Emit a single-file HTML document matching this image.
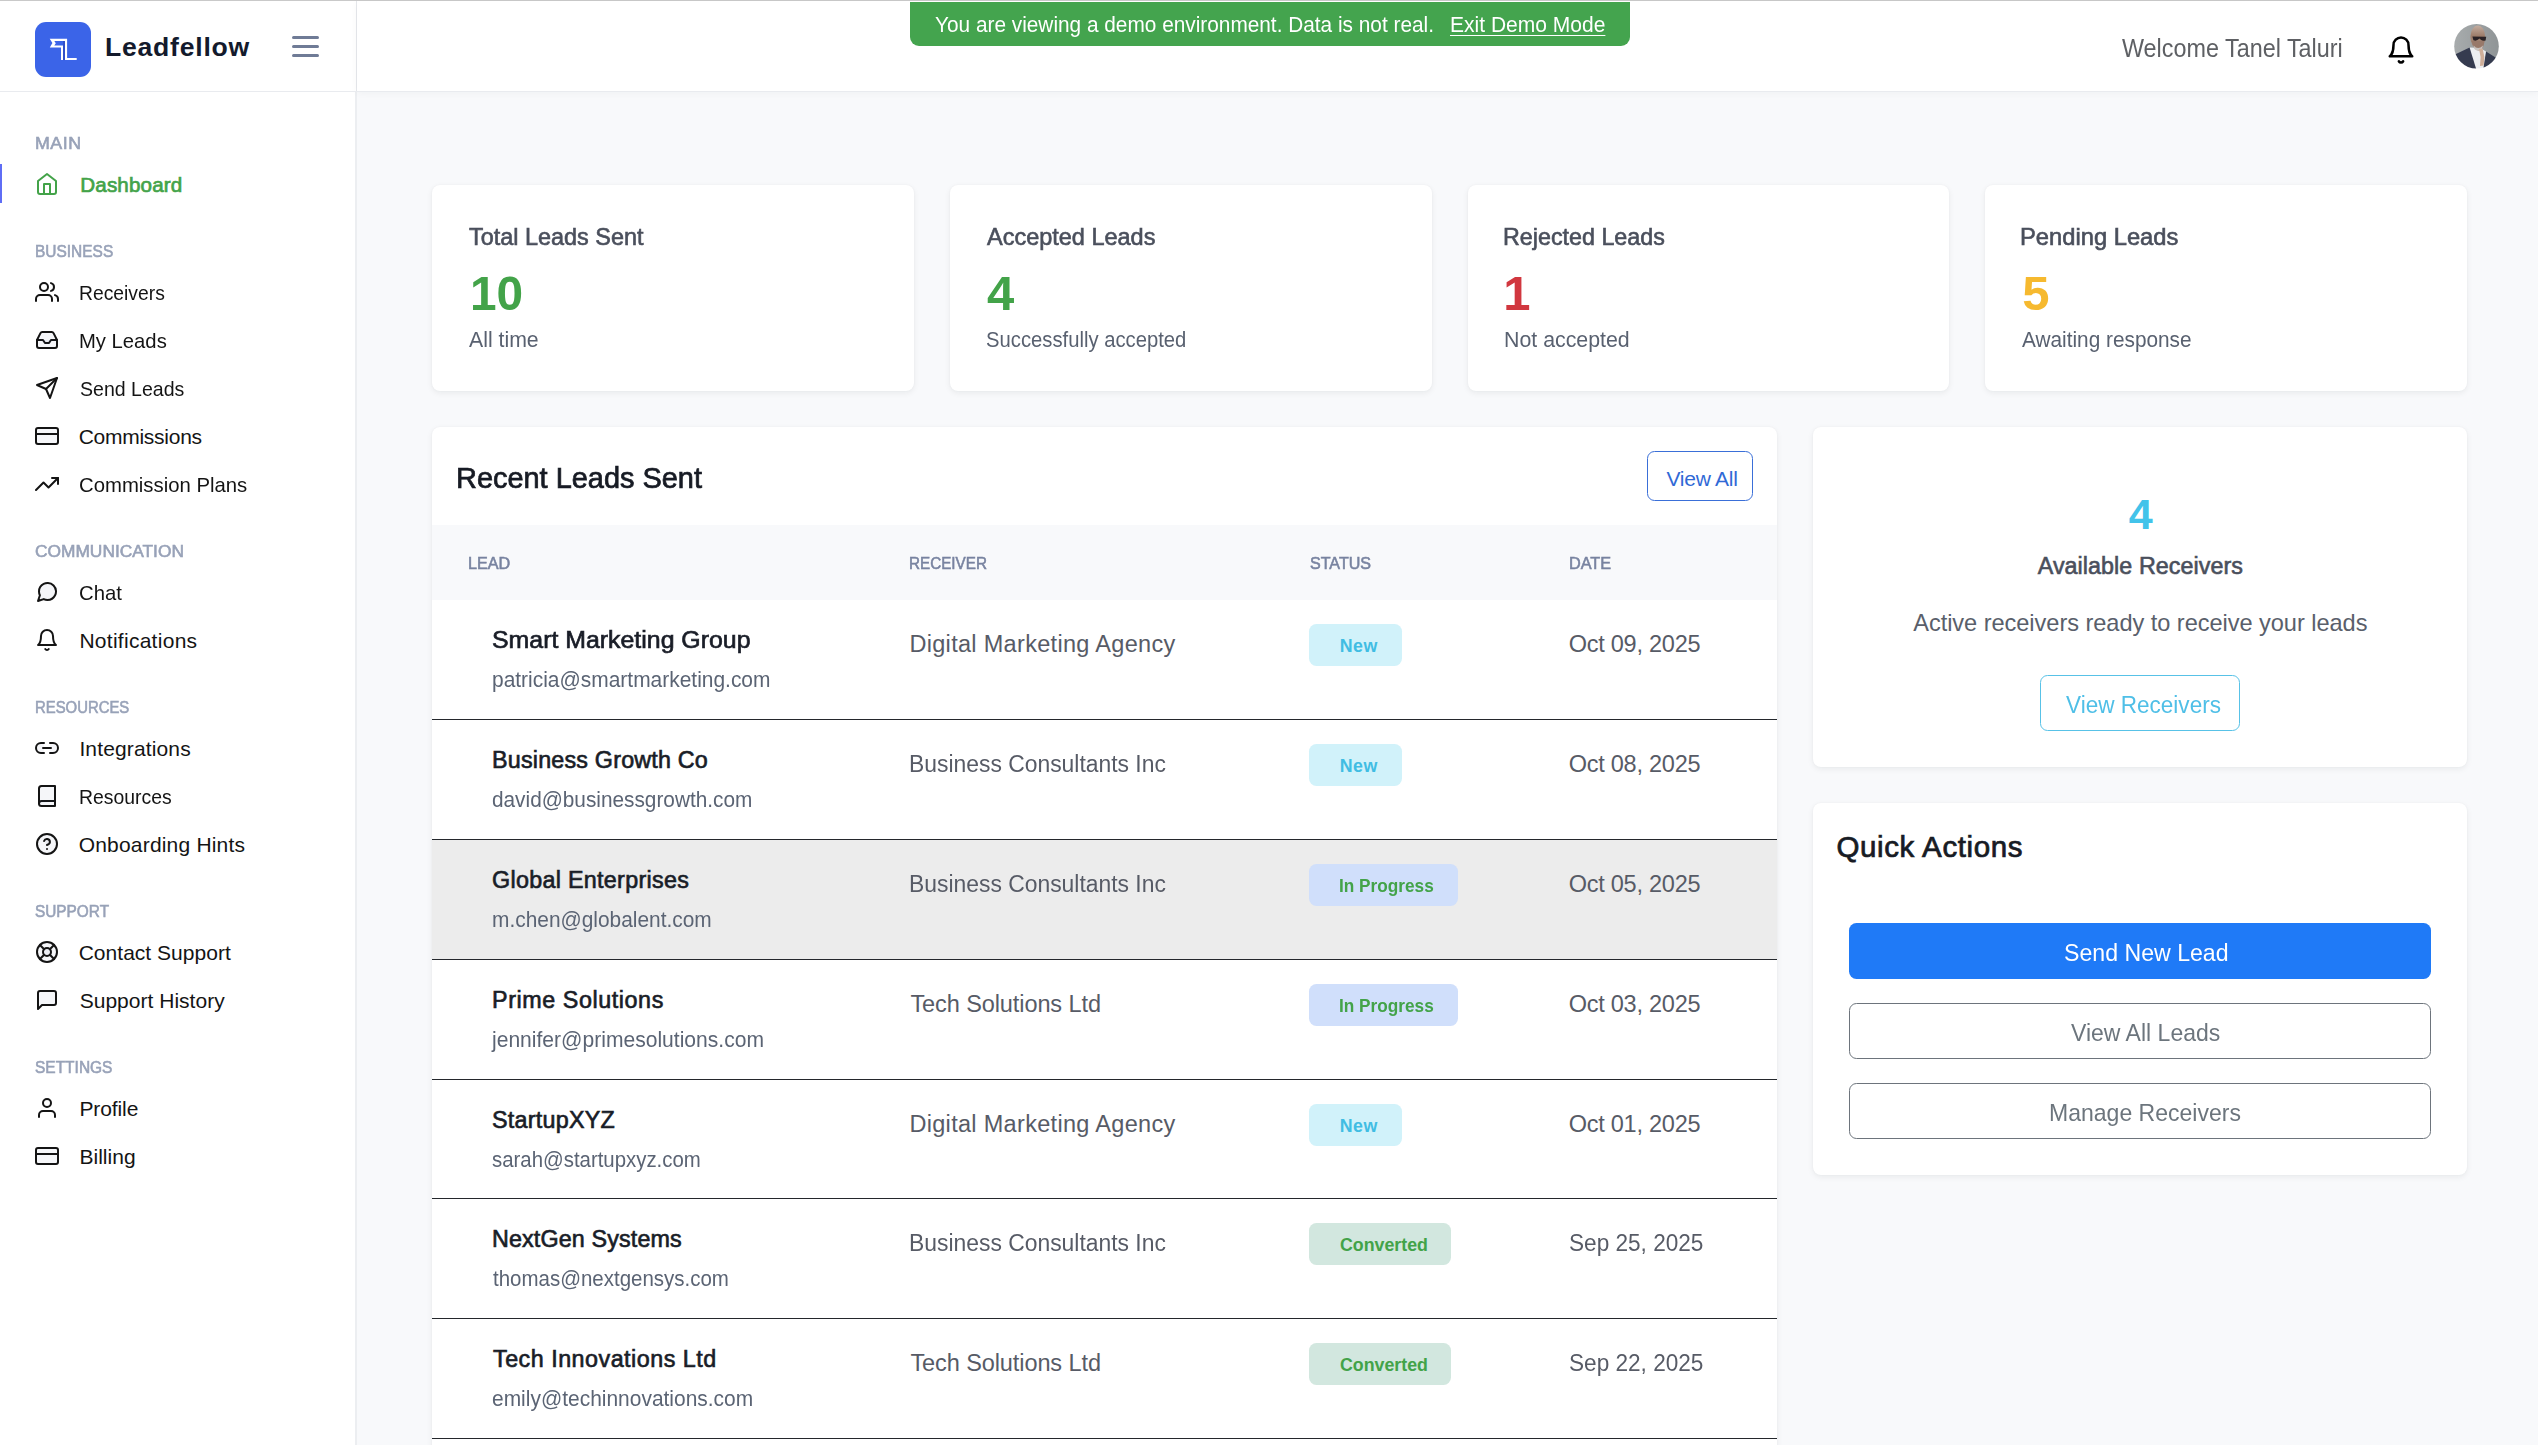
<!DOCTYPE html>
<html lang="en"><head><meta charset="utf-8"><title>Leadfellow – Dashboard</title>
<style>
html,body{margin:0;padding:0}
body{width:2538px;height:1445px;overflow:hidden;background:#f8f9fb;position:relative;font-family:'Liberation Sans',sans-serif}
.abs,.t,.ic,.box{position:absolute}
.t{transform-origin:0 50%;white-space:pre;margin:0;padding:0;text-decoration:none;font-weight:400;display:block}
aside,header,main,section,nav,ul,li,table{position:absolute;left:0;top:0;margin:0;padding:0;list-style:none}
.card{position:absolute;background:#fff;border-radius:8px;box-shadow:0 2px 6px rgba(20,25,35,.065),0 0 2px rgba(20,25,35,.045)}
.badge{position:absolute;border-radius:7.5px;height:42px}
.btn{position:absolute;box-sizing:border-box;border-radius:7.5px;background:#fff}
.line{position:absolute;left:432px;width:1345px;height:1px;background:#24272c}
</style></head><body>

<div class="box" style="left:0;top:0;width:2538px;height:1px;background:#c9c9c9"></div>
<aside>
<div class="box" style="left:0;top:1px;width:357px;height:1444px;background:#fff"></div>
<div class="box" style="left:355px;top:92px;width:2px;height:1353px;background:#eceef1"></div>
<div class="box" style="left:356px;top:1px;width:1px;height:90px;background:#e6e8ec"></div>
<div class="box" style="left:35px;top:22px;width:56px;height:55px;border-radius:11px;background:#3b64e8"></div>
<svg class="ic" style="left:35px;top:22px" width="56" height="55" viewBox="35 22 56 55"><rect x="63" y="41" width="2" height="19.1" fill="#3150c8"/><polygon fill="#fff" points="49.7,38.8 67.1,38.8 67.1,57.9 76.7,57.9 76.7,60.1 65,60.1 65,41 54.3,41 55.8,43.2 54.3,45.4 63,45.4 63,60.1 61,60.1 61,47.5 49.8,47.5 52.4,43.1"/></svg>
<div class="t brand" style="left:105.00px;top:34.00px;font-size:26.6px;line-height:26.6px;font-weight:700;letter-spacing:0.763px;color:#131a2c;">Leadfellow</div>
<div class="box" style="left:292.4px;top:36.1px;width:26.5px;height:3px;border-radius:2px;background:#6f7b96"></div>
<div class="box" style="left:292.4px;top:45.1px;width:26.5px;height:3px;border-radius:2px;background:#6f7b96"></div>
<div class="box" style="left:292.4px;top:53.9px;width:26.5px;height:3px;border-radius:2px;background:#6f7b96"></div>
<nav>
<h6 class="t" style="left:34.82px;top:135.00px;font-size:16.2px;line-height:16.2px;letter-spacing:0.456px;transform:scaleX(1.1000);-webkit-text-stroke:0.58px #98a2b8;color:#98a2b8;">MAIN</h6>
<h6 class="t" style="left:34.92px;top:243.00px;font-size:16.2px;line-height:16.2px;transform:scaleX(0.9554);-webkit-text-stroke:0.58px #98a2b8;color:#98a2b8;">BUSINESS</h6>
<h6 class="t" style="left:35.21px;top:543.00px;font-size:16.2px;line-height:16.2px;transform:scaleX(1.0707);-webkit-text-stroke:0.58px #98a2b8;color:#98a2b8;">COMMUNICATION</h6>
<h6 class="t" style="left:34.95px;top:699.00px;font-size:16.2px;line-height:16.2px;transform:scaleX(0.9196);-webkit-text-stroke:0.58px #98a2b8;color:#98a2b8;">RESOURCES</h6>
<h6 class="t" style="left:35.18px;top:903.00px;font-size:16.2px;line-height:16.2px;transform:scaleX(0.9498);-webkit-text-stroke:0.58px #98a2b8;color:#98a2b8;">SUPPORT</h6>
<h6 class="t" style="left:35.18px;top:1059.00px;font-size:16.2px;line-height:16.2px;transform:scaleX(0.9568);-webkit-text-stroke:0.58px #98a2b8;color:#98a2b8;">SETTINGS</h6>
<div class="box" style="left:0;top:164px;width:2px;height:39px;background:#5f6df5"></div>
<svg class="ic" style="left:35px;top:172px" width="24" height="24" viewBox="0 0 24 24" fill="none" stroke="#43a349" stroke-width="2" stroke-linecap="round" stroke-linejoin="round"><path d="M3 9l9-7 9 7v11a2 2 0 0 1-2 2H5a2 2 0 0 1-2-2z"/><polyline points="9 22 9 12 15 12 15 22"/></svg>
<a class="t" style="left:80.25px;top:175.00px;font-size:20.6px;line-height:20.6px;letter-spacing:0.163px;-webkit-text-stroke:0.7px #43a349;color:#43a349;">Dashboard</a>
<svg class="ic" style="left:35px;top:280px" width="24" height="24" viewBox="0 0 24 24" fill="none" stroke="#141414" stroke-width="2" stroke-linecap="round" stroke-linejoin="round"><path d="M17 21v-2a4 4 0 0 0-4-4H5a4 4 0 0 0-4 4v2"/><circle cx="9" cy="7" r="4"/><path d="M23 21v-2a4 4 0 0 0-3-3.87"/><path d="M16 3.13a4 4 0 0 1 0 7.75"/></svg>
<a class="t" style="left:79.48px;top:282.00px;font-size:21px;line-height:21px;transform:scaleX(0.9188);color:#141414;">Receivers</a>
<svg class="ic" style="left:35px;top:328px" width="24" height="24" viewBox="0 0 24 24" fill="rgba(70,90,150,.055)" stroke="#141414" stroke-width="2" stroke-linecap="round" stroke-linejoin="round"><polyline points="22 12 16 12 14 15 10 15 8 12 2 12"/><path d="M5.45 5.11L2 12v6a2 2 0 0 0 2 2h16a2 2 0 0 0 2-2v-6l-3.45-6.89A2 2 0 0 0 16.76 4H7.24a2 2 0 0 0-1.79 1.11z"/></svg>
<a class="t" style="left:79.44px;top:330.00px;font-size:21px;line-height:21px;transform:scaleX(0.9638);color:#141414;">My Leads</a>
<svg class="ic" style="left:35px;top:376px" width="24" height="24" viewBox="0 0 24 24" fill="none" stroke="#141414" stroke-width="2" stroke-linecap="round" stroke-linejoin="round"><line x1="22" y1="2" x2="11" y2="13"/><polygon points="22 2 15 22 11 13 2 9 22 2"/></svg>
<a class="t" style="left:79.70px;top:378.00px;font-size:21px;line-height:21px;transform:scaleX(0.9310);color:#141414;">Send Leads</a>
<svg class="ic" style="left:35px;top:424px" width="24" height="24" viewBox="0 0 24 24" fill="rgba(70,90,150,.055)" stroke="#141414" stroke-width="2" stroke-linecap="round" stroke-linejoin="round"><rect x="1" y="4" width="22" height="16" rx="2" ry="2"/><line x1="1" y1="10" x2="23" y2="10"/></svg>
<a class="t" style="left:78.70px;top:426.00px;font-size:21px;line-height:21px;letter-spacing:-0.262px;color:#141414;">Commissions</a>
<svg class="ic" style="left:35px;top:472px" width="24" height="24" viewBox="0 0 24 24" fill="none" stroke="#141414" stroke-width="2" stroke-linecap="round" stroke-linejoin="round"><polyline points="23 6 13.5 15.5 8.5 10.5 1 18"/><polyline points="17 6 23 6 23 12"/></svg>
<a class="t" style="left:78.73px;top:474.00px;font-size:21px;line-height:21px;transform:scaleX(0.9676);color:#141414;">Commission Plans</a>
<svg class="ic" style="left:35px;top:580px" width="24" height="24" viewBox="0 0 24 24" fill="rgba(70,90,150,.055)" stroke="#141414" stroke-width="2" stroke-linecap="round" stroke-linejoin="round"><path d="M21 11.5a8.38 8.38 0 0 1-.9 3.8 8.5 8.5 0 0 1-7.6 4.7 8.38 8.38 0 0 1-3.8-.9L3 21l1.9-5.7a8.38 8.38 0 0 1-.9-3.8 8.5 8.5 0 0 1 4.7-7.6 8.38 8.38 0 0 1 3.8-.9h.5a8.48 8.48 0 0 1 8 8v.5z"/></svg>
<a class="t" style="left:78.73px;top:582.00px;font-size:21px;line-height:21px;transform:scaleX(0.9673);color:#141414;">Chat</a>
<svg class="ic" style="left:35px;top:628px" width="24" height="24" viewBox="0 0 24 24" fill="none" stroke="#141414" stroke-width="2" stroke-linecap="round" stroke-linejoin="round"><path d="M18 8A6 6 0 0 0 6 8c0 7-3 9-3 9h18s-3-2-3-9"/><path d="M13.73 21a2 2 0 0 1-3.46 0"/></svg>
<a class="t" style="left:79.40px;top:630.00px;font-size:21px;line-height:21px;letter-spacing:0.276px;color:#141414;">Notifications</a>
<svg class="ic" style="left:35px;top:736px" width="24" height="24" viewBox="0 0 24 24" fill="rgba(70,90,150,.055)" stroke="#141414" stroke-width="2" stroke-linecap="round" stroke-linejoin="round"><path d="M15 7h3a5 5 0 0 1 5 5 5 5 0 0 1-5 5h-3m-6 0H6a5 5 0 0 1-5-5 5 5 0 0 1 5-5h3"/><line x1="8" y1="12" x2="16" y2="12"/></svg>
<a class="t" style="left:79.40px;top:738.00px;font-size:21px;line-height:21px;letter-spacing:0.142px;color:#141414;">Integrations</a>
<svg class="ic" style="left:35px;top:784px" width="24" height="24" viewBox="0 0 24 24" fill="rgba(70,90,150,.055)" stroke="#141414" stroke-width="2" stroke-linecap="round" stroke-linejoin="round"><path d="M4 19.5A2.5 2.5 0 0 1 6.5 17H20"/><path d="M6.5 2H20v20H6.5A2.5 2.5 0 0 1 4 19.5v-15A2.5 2.5 0 0 1 6.5 2z"/></svg>
<a class="t" style="left:79.48px;top:786.00px;font-size:21px;line-height:21px;transform:scaleX(0.9234);color:#141414;">Resources</a>
<svg class="ic" style="left:35px;top:832px" width="24" height="24" viewBox="0 0 24 24" fill="rgba(70,90,150,.055)" stroke="#141414" stroke-width="2" stroke-linecap="round" stroke-linejoin="round"><circle cx="12" cy="12" r="10"/><path d="M9.09 9a3 3 0 0 1 5.83 1c0 2-3 3-3 3"/><line x1="12" y1="17" x2="12.01" y2="17"/></svg>
<a class="t" style="left:78.70px;top:834.00px;font-size:21px;line-height:21px;letter-spacing:0.192px;color:#141414;">Onboarding Hints</a>
<svg class="ic" style="left:35px;top:940px" width="24" height="24" viewBox="0 0 24 24" fill="rgba(70,90,150,.055)" stroke="#141414" stroke-width="2" stroke-linecap="round" stroke-linejoin="round"><circle cx="12" cy="12" r="10"/><circle cx="12" cy="12" r="4"/><line x1="4.93" y1="4.93" x2="9.17" y2="9.17"/><line x1="14.83" y1="14.83" x2="19.07" y2="19.07"/><line x1="14.83" y1="9.17" x2="19.07" y2="4.93"/><line x1="4.93" y1="19.07" x2="9.17" y2="14.83"/></svg>
<a class="t" style="left:78.70px;top:942.00px;font-size:21px;line-height:21px;letter-spacing:0.020px;color:#141414;">Contact Support</a>
<svg class="ic" style="left:35px;top:988px" width="24" height="24" viewBox="0 0 24 24" fill="rgba(70,90,150,.055)" stroke="#141414" stroke-width="2" stroke-linecap="round" stroke-linejoin="round"><path d="M21 15a2 2 0 0 1-2 2H7l-4 4V5a2 2 0 0 1 2-2h14a2 2 0 0 1 2 2z"/></svg>
<a class="t" style="left:79.70px;top:990.00px;font-size:21px;line-height:21px;letter-spacing:0.020px;color:#141414;">Support History</a>
<svg class="ic" style="left:35px;top:1096px" width="24" height="24" viewBox="0 0 24 24" fill="none" stroke="#141414" stroke-width="2" stroke-linecap="round" stroke-linejoin="round"><path d="M20 21v-2a4 4 0 0 0-4-4H8a4 4 0 0 0-4 4v2"/><circle cx="12" cy="7" r="4"/></svg>
<a class="t" style="left:79.40px;top:1098.00px;font-size:21px;line-height:21px;letter-spacing:-0.091px;color:#141414;">Profile</a>
<svg class="ic" style="left:35px;top:1144px" width="24" height="24" viewBox="0 0 24 24" fill="rgba(70,90,150,.055)" stroke="#141414" stroke-width="2" stroke-linecap="round" stroke-linejoin="round"><rect x="1" y="4" width="22" height="16" rx="2" ry="2"/><line x1="1" y1="10" x2="23" y2="10"/></svg>
<a class="t" style="left:79.40px;top:1146.00px;font-size:21px;line-height:21px;letter-spacing:0.042px;color:#141414;">Billing</a>
</nav></aside>
<header>
<div class="box" style="left:357px;top:1px;width:2181px;height:90px;background:#fff;box-shadow:0 2px 8px rgba(30,40,60,.04)"></div>
<div class="box" style="left:0;top:91px;width:2538px;height:1px;background:#e9ebef"></div>
<div class="box" style="left:910px;top:2px;width:720px;height:44px;background:#44a44e;border-radius:0 0 9px 9px"></div>
<span class="t" style="left:934.70px;top:14.00px;font-size:22px;line-height:22px;transform:scaleX(0.9459);color:#fff;">You are viewing a demo environment. Data is not real.</span>
<a class="t" style="left:1450.04px;top:14.00px;font-size:22px;line-height:22px;transform:scaleX(0.9555);color:#fff;text-decoration:underline;text-decoration-thickness:1.4px;text-underline-offset:2.5px;">Exit Demo Mode</a>
<span class="t" style="left:2122.00px;top:36.00px;font-size:25px;line-height:25px;transform:scaleX(0.9343);color:#5e6064;">Welcome Tanel Taluri</span>
<svg class="ic" style="left:2386px;top:35px" width="30" height="30" viewBox="0 0 24 24" fill="none" stroke="#000" stroke-width="2" stroke-linecap="round" stroke-linejoin="round"><path d="M18 8A6 6 0 0 0 6 8c0 7-3 9-3 9h18s-3-2-3-9"/><path d="M13.73 21a2 2 0 0 1-3.46 0"/></svg>
<svg class="ic" style="left:2454px;top:24px" width="45" height="45" viewBox="0 0 45 45">
<defs><clipPath id="av"><circle cx="22.5" cy="22.3" r="22.3"/></clipPath>
<filter id="bl" x="-10%" y="-10%" width="120%" height="120%"><feGaussianBlur stdDeviation="0.55"/></filter>
<linearGradient id="bg" x1="0" x2="1"><stop offset="0" stop-color="#a9adae"/><stop offset="1" stop-color="#8e9395"/></linearGradient>
<linearGradient id="sk" x1="0" y1="0" x2="0" y2="1"><stop offset="0" stop-color="#c4aea1"/><stop offset=".45" stop-color="#9d7d6b"/><stop offset="1" stop-color="#a58b7c"/></linearGradient></defs>
<g clip-path="url(#av)"><g filter="url(#bl)"><rect x="-3" y="-3" width="51" height="51" fill="url(#bg)"/>
<path d="M-2 33 L2 30 L15.6 23.6 L19 28 L23 47 L-2 47Z" fill="#343a50"/>
<path d="M47 36 L40.8 33 L32 27.6 L30 33 L27.5 47 L47 47Z" fill="#343a50"/>
<path d="M15.6 23.6 L22.8 47 L29 47 L32 27.6 L26 24Z" fill="#eceef1"/>
<ellipse cx="23.8" cy="13" rx="7.4" ry="11.6" fill="url(#sk)"/>
<path d="M17.5 17 Q20 27 25 26.5 Q29.5 26 30.5 17Z" fill="#98796a"/>
<path d="M19.5 21.5 Q24 26.5 29 21.5 L28 25 Q24 28 20.5 25Z" fill="#c9c3bf"/>
<path d="M18.4 12.4 L32.2 12.8 L31.6 16.4 Q28.8 17.6 26.6 15.4 L25.4 14.6 Q22.6 17.6 19.4 16.2Z" fill="#2a2225"/>
<path d="M25 25 L28.6 24.4 L30.4 33 L29.6 41.5 L26 42 L26.6 33Z" fill="#cfae99"/>
</g></g></svg>
</header>
<main>
<section><div class="card" style="left:432px;top:185px;width:482px;height:206px"></div>
<h5 class="t" style="left:469.01px;top:225.00px;font-size:24.5px;line-height:24.5px;transform:scaleX(0.9561);-webkit-text-stroke:0.64px #4a4f5c;color:#4a4f5c;">Total Leads Sent</h5>
<div class="t" style="left:469.87px;top:269.00px;font-size:49px;line-height:49px;font-weight:700;transform:scaleX(0.9751);color:#43a349;">10</div>
<p class="t" style="left:468.70px;top:329.00px;font-size:22.1px;line-height:22.1px;transform:scaleX(0.9620);color:#596170;">All time</p>
</section>
<section><div class="card" style="left:950px;top:185px;width:482px;height:206px"></div>
<h5 class="t" style="left:987.01px;top:225.00px;font-size:24.5px;line-height:24.5px;transform:scaleX(0.9585);-webkit-text-stroke:0.64px #4a4f5c;color:#4a4f5c;">Accepted Leads</h5>
<div class="t" style="left:986.90px;top:269.00px;font-size:49px;line-height:49px;font-weight:700;color:#43a349;">4</div>
<p class="t" style="left:985.78px;top:329.00px;font-size:22.1px;line-height:22.1px;transform:scaleX(0.9163);color:#596170;">Successfully accepted</p>
</section>
<section><div class="card" style="left:1468px;top:185px;width:481px;height:206px"></div>
<h5 class="t" style="left:1503.10px;top:225.00px;font-size:24.5px;line-height:24.5px;transform:scaleX(0.9505);-webkit-text-stroke:0.64px #4a4f5c;color:#4a4f5c;">Rejected Leads</h5>
<div class="t" style="left:1503.20px;top:269.00px;font-size:49px;line-height:49px;font-weight:700;color:#d1373f;">1</div>
<p class="t" style="left:1503.73px;top:329.00px;font-size:22.1px;line-height:22.1px;transform:scaleX(0.9656);color:#596170;">Not accepted</p>
</section>
<section><div class="card" style="left:1985px;top:185px;width:482px;height:206px"></div>
<h5 class="t" style="left:2020.07px;top:225.00px;font-size:24.5px;line-height:24.5px;transform:scaleX(0.9687);-webkit-text-stroke:0.64px #4a4f5c;color:#4a4f5c;">Pending Leads</h5>
<div class="t" style="left:2022.20px;top:269.00px;font-size:49px;line-height:49px;font-weight:700;color:#f6b92f;">5</div>
<p class="t" style="left:2021.70px;top:329.00px;font-size:22.1px;line-height:22.1px;transform:scaleX(0.9413);color:#596170;">Awaiting response</p>
</section>
<section>
<div class="card" style="left:432px;top:427px;width:1345px;height:1040px;border-radius:8px 8px 0 0"></div>
<h2 class="t" style="left:456.40px;top:463.00px;font-size:29.5px;line-height:29.5px;transform:scaleX(0.9801);-webkit-text-stroke:0.74px #171b24;color:#171b24;">Recent Leads Sent</h2>
<a class="btn" style="left:1647px;top:451px;width:106px;height:50px;border:1px solid #3a6fd8"></a>
<a class="t" style="left:1666.40px;top:468.00px;font-size:21px;line-height:21px;letter-spacing:-0.235px;color:#3069d6;">View All</a>
<div class="box" style="left:432px;top:525px;width:1345px;height:75px;background:#f8f9fb"></div>
<div class="t th" style="left:468.42px;top:555.00px;font-size:17.0px;line-height:17.0px;transform:scaleX(0.9517);-webkit-text-stroke:0.58px #7883a0;color:#7883a0;">LEAD</div>
<div class="t th" style="left:908.96px;top:555.00px;font-size:17.0px;line-height:17.0px;transform:scaleX(0.8966);-webkit-text-stroke:0.58px #7883a0;color:#7883a0;">RECEIVER</div>
<div class="t th" style="left:1309.87px;top:555.00px;font-size:17.0px;line-height:17.0px;transform:scaleX(0.9463);-webkit-text-stroke:0.58px #7883a0;color:#7883a0;">STATUS</div>
<div class="t th" style="left:1568.92px;top:555.00px;font-size:17.0px;line-height:17.0px;transform:scaleX(0.9557);-webkit-text-stroke:0.58px #7883a0;color:#7883a0;">DATE</div>
<div class="box" style="left:432px;top:840px;width:1345px;height:119px;background:#ececec"></div>
<div class="t nm" style="left:491.98px;top:629.00px;font-size:23.3px;line-height:23.3px;transform:scaleX(1.0677);-webkit-text-stroke:0.65px #191d27;color:#191d27;">Smart Marketing Group</div>
<div class="t em" style="left:491.94px;top:669.00px;font-size:21.8px;line-height:21.8px;transform:scaleX(0.9608);color:#5b6474;">patricia@smartmarketing.com</div>
<div class="t" style="left:909.40px;top:633.00px;font-size:23.5px;line-height:23.5px;letter-spacing:0.314px;color:#575b66;">Digital Marketing Agency</div>
<div class="badge" style="left:1309px;top:624px;width:92.5px;background:#d1f2fa"></div>
<div class="t" style="left:1339.70px;top:638.00px;font-size:17.8px;line-height:17.8px;font-weight:700;letter-spacing:0.585px;color:#40bde3;">New</div>
<div class="t" style="left:1568.70px;top:633.00px;font-size:23.5px;line-height:23.5px;letter-spacing:-0.245px;color:#575b66;">Oct 09, 2025</div>
<div class="t nm" style="left:492.02px;top:749.00px;font-size:23.3px;line-height:23.3px;letter-spacing:0.204px;-webkit-text-stroke:0.65px #191d27;color:#191d27;">Business Growth Co</div>
<div class="t em" style="left:492.20px;top:789.00px;font-size:21.8px;line-height:21.8px;transform:scaleX(0.9538);color:#5b6474;">david@businessgrowth.com</div>
<div class="t" style="left:909.43px;top:753.00px;font-size:23.5px;line-height:23.5px;transform:scaleX(0.9734);color:#575b66;">Business Consultants Inc</div>
<div class="badge" style="left:1309px;top:744px;width:92.5px;background:#d1f2fa"></div>
<div class="t" style="left:1339.70px;top:758.00px;font-size:17.8px;line-height:17.8px;font-weight:700;letter-spacing:0.585px;color:#40bde3;">New</div>
<div class="t" style="left:1568.70px;top:753.00px;font-size:23.5px;line-height:23.5px;letter-spacing:-0.245px;color:#575b66;">Oct 08, 2025</div>
<div class="t nm" style="left:492.02px;top:869.00px;font-size:23.3px;line-height:23.3px;letter-spacing:0.303px;-webkit-text-stroke:0.65px #191d27;color:#191d27;">Global Enterprises</div>
<div class="t em" style="left:491.94px;top:909.00px;font-size:21.8px;line-height:21.8px;transform:scaleX(0.9584);color:#5b6474;">m.chen@globalent.com</div>
<div class="t" style="left:909.43px;top:873.00px;font-size:23.5px;line-height:23.5px;transform:scaleX(0.9734);color:#575b66;">Business Consultants Inc</div>
<div class="badge" style="left:1309px;top:864px;width:149px;background:#d0dffb"></div>
<div class="t" style="left:1338.83px;top:878.00px;font-size:17.8px;line-height:17.8px;font-weight:700;transform:scaleX(0.9686);color:#43a349;">In Progress</div>
<div class="t" style="left:1568.70px;top:873.00px;font-size:23.5px;line-height:23.5px;letter-spacing:-0.245px;color:#575b66;">Oct 05, 2025</div>
<div class="t nm" style="left:492.02px;top:989.00px;font-size:23.3px;line-height:23.3px;letter-spacing:0.582px;-webkit-text-stroke:0.65px #191d27;color:#191d27;">Prime Solutions</div>
<div class="t em" style="left:492.27px;top:1029.00px;font-size:21.8px;line-height:21.8px;transform:scaleX(0.9665);color:#5b6474;">jennifer@primesolutions.com</div>
<div class="t" style="left:910.40px;top:993.00px;font-size:23.5px;line-height:23.5px;letter-spacing:-0.086px;color:#575b66;">Tech Solutions Ltd</div>
<div class="badge" style="left:1309px;top:984px;width:149px;background:#d0dffb"></div>
<div class="t" style="left:1338.83px;top:998.00px;font-size:17.8px;line-height:17.8px;font-weight:700;transform:scaleX(0.9686);color:#43a349;">In Progress</div>
<div class="t" style="left:1568.70px;top:993.00px;font-size:23.5px;line-height:23.5px;letter-spacing:-0.245px;color:#575b66;">Oct 03, 2025</div>
<div class="t nm" style="left:492.02px;top:1109.00px;font-size:23.3px;line-height:23.3px;letter-spacing:0.251px;-webkit-text-stroke:0.65px #191d27;color:#191d27;">StartupXYZ</div>
<div class="t em" style="left:492.20px;top:1149.00px;font-size:21.8px;line-height:21.8px;transform:scaleX(0.9353);color:#5b6474;">sarah@startupxyz.com</div>
<div class="t" style="left:909.40px;top:1113.00px;font-size:23.5px;line-height:23.5px;letter-spacing:0.314px;color:#575b66;">Digital Marketing Agency</div>
<div class="badge" style="left:1309px;top:1104px;width:92.5px;background:#d1f2fa"></div>
<div class="t" style="left:1339.70px;top:1118.00px;font-size:17.8px;line-height:17.8px;font-weight:700;letter-spacing:0.585px;color:#40bde3;">New</div>
<div class="t" style="left:1568.70px;top:1113.00px;font-size:23.5px;line-height:23.5px;letter-spacing:-0.245px;color:#575b66;">Oct 01, 2025</div>
<div class="t nm" style="left:492.02px;top:1228.00px;font-size:23.3px;line-height:23.3px;letter-spacing:0.141px;-webkit-text-stroke:0.65px #191d27;color:#191d27;">NextGen Systems</div>
<div class="t em" style="left:492.90px;top:1268.00px;font-size:21.8px;line-height:21.8px;transform:scaleX(0.9394);color:#5b6474;">thomas@nextgensys.com</div>
<div class="t" style="left:909.43px;top:1232.00px;font-size:23.5px;line-height:23.5px;transform:scaleX(0.9734);color:#575b66;">Business Consultants Inc</div>
<div class="badge" style="left:1309px;top:1223px;width:142px;background:#d2e7df"></div>
<div class="t" style="left:1339.90px;top:1237.00px;font-size:17.8px;line-height:17.8px;font-weight:700;letter-spacing:0.016px;color:#43a349;">Converted</div>
<div class="t" style="left:1568.74px;top:1232.00px;font-size:23.5px;line-height:23.5px;transform:scaleX(0.9615);color:#575b66;">Sep 25, 2025</div>
<div class="t nm" style="left:493.02px;top:1348.00px;font-size:23.3px;line-height:23.3px;letter-spacing:0.495px;-webkit-text-stroke:0.65px #191d27;color:#191d27;">Tech Innovations Ltd</div>
<div class="t em" style="left:492.20px;top:1388.00px;font-size:21.8px;line-height:21.8px;transform:scaleX(0.9614);color:#5b6474;">emily@techinnovations.com</div>
<div class="t" style="left:910.40px;top:1352.00px;font-size:23.5px;line-height:23.5px;letter-spacing:-0.086px;color:#575b66;">Tech Solutions Ltd</div>
<div class="badge" style="left:1309px;top:1343px;width:142px;background:#d2e7df"></div>
<div class="t" style="left:1339.90px;top:1357.00px;font-size:17.8px;line-height:17.8px;font-weight:700;letter-spacing:0.016px;color:#43a349;">Converted</div>
<div class="t" style="left:1568.74px;top:1352.00px;font-size:23.5px;line-height:23.5px;transform:scaleX(0.9615);color:#575b66;">Sep 22, 2025</div>
<div class="line" style="top:719px"></div>
<div class="line" style="top:839px"></div>
<div class="line" style="top:959px"></div>
<div class="line" style="top:1079px"></div>
<div class="line" style="top:1198px"></div>
<div class="line" style="top:1318px"></div>
<div class="line" style="top:1438px"></div>
</section>
<section>
<div class="card" style="left:1813px;top:427px;width:654px;height:340px"></div>
<div class="t" style="left:2128.70px;top:493.00px;font-size:43px;line-height:43px;font-weight:700;color:#42c3ea;">4</div>
<h5 class="t" style="left:2037.71px;top:555.00px;font-size:23.3px;line-height:23.3px;letter-spacing:0.060px;-webkit-text-stroke:0.61px #4a4f5c;color:#4a4f5c;">Available Receivers</h5>
<p class="t" style="left:1913.20px;top:612.00px;font-size:23.6px;line-height:23.6px;letter-spacing:-0.048px;color:#5a5f6b;">Active receivers ready to receive your leads</p>
<a class="btn" style="left:2040px;top:675px;width:200px;height:56px;border:1px solid #58c2e7"></a>
<a class="t" style="left:2065.60px;top:693.00px;font-size:24.6px;line-height:24.6px;transform:scaleX(0.9168);color:#4fbfe7;">View Receivers</a>
</section>
<section>
<div class="card" style="left:1813px;top:803px;width:654px;height:372px"></div>
<h2 class="t" style="left:1836.57px;top:832.00px;font-size:29.5px;line-height:29.5px;letter-spacing:0.597px;-webkit-text-stroke:0.74px #171b24;color:#171b24;">Quick Actions</h2>
<a class="btn" style="left:1849px;top:923px;width:582px;height:56px;background:#1f7af7"></a>
<a class="t" style="left:2063.76px;top:941.00px;font-size:24.6px;line-height:24.6px;transform:scaleX(0.9404);color:#fff;">Send New Lead</a>
<a class="btn" style="left:1849px;top:1003px;width:582px;height:56px;border:1px solid #6d747c"></a>
<a class="t" style="left:2070.90px;top:1021.00px;font-size:24.6px;line-height:24.6px;transform:scaleX(0.9360);color:#6c757d;">View All Leads</a>
<a class="btn" style="left:1849px;top:1083px;width:582px;height:56px;border:1px solid #6d747c"></a>
<a class="t" style="left:2049.23px;top:1101.00px;font-size:24.6px;line-height:24.6px;transform:scaleX(0.9361);color:#6c757d;">Manage Receivers</a>
</section>
</main></body></html>
